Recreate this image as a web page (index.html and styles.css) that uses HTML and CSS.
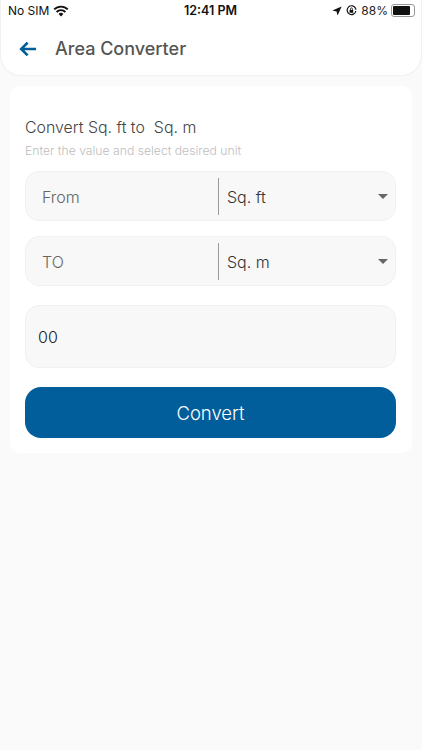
FILE: index.html
```html
<!DOCTYPE html>
<html lang="en">
<head>
    <meta charset="UTF-8">
    <meta name="viewport" content="width=device-width, initial-scale=1.0">
    <title>Area Converter</title>
    <link rel="stylesheet" href="styles.css">
</head>
<body>

    <header class="top">
        <div class="status-bar">
            <div class="status-left">
                <span>No SIM</span>
                <svg class="wifi" width="16" height="12" viewBox="0 0 16 12">
                    <path d="M8 11.6 5.6 9a3.4 3.4 0 0 1 4.8 0z" fill="#111"/>
                    <path d="M3.6 7a6.2 6.2 0 0 1 8.8 0M1.2 4.4a9.6 9.6 0 0 1 13.6 0" fill="none" stroke="#111" stroke-width="1.9"/>
                </svg>
            </div>
            <div class="status-time">12:41 PM</div>
            <div class="status-right">
                <svg width="10" height="10" viewBox="0 0 10 10"><path d="M9.6.4 5.6 9.6 4.6 5.4.4 4.4z" fill="#111"/></svg>
                <svg width="11" height="11" viewBox="0 0 11 11">
                    <path d="M9.6 3.4A4.4 4.4 0 1 0 9.9 6" fill="none" stroke="#111" stroke-width="1.2"/>
                    <path d="M8.6 4.4h2.2L9.6 2.6z" fill="#111"/>
                    <rect x="3.6" y="5" width="3.6" height="2.8" fill="#111"/>
                    <path d="M4.4 5V3.9a1 1 0 0 1 2 0V5" fill="none" stroke="#111" stroke-width=".8"/>
                </svg>
                <span>88%</span>
                <div class="battery"><div class="battery-level"></div></div>
            </div>
        </div>
        <div class="title-bar">
            <svg class="back" width="18" height="16" viewBox="0 0 18 16">
                <path d="M17 8H2.5M8.6 1.6 2.2 8l6.4 6.4" fill="none" stroke="#025e9b" stroke-width="2.6"/>
            </svg>
            <h1>Area Converter</h1>
        </div>
    </header>

    <main class="card">
        <h2>Convert Sq. ft to&nbsp; Sq. m</h2>
        <p class="hint">Enter the value and select desired unit</p>

        <div class="field field-from">
            <span class="field-label">From</span>
            <div class="unit">
                <span>Sq. ft</span>
                <span class="caret"></span>
            </div>
        </div>

        <div class="field field-to">
            <span class="field-label">TO</span>
            <div class="unit">
                <span>Sq. m</span>
                <span class="caret"></span>
            </div>
        </div>

        <div class="result">00</div>

        <button class="convert-button">Convert</button>
    </main>

</body>
</html>
```

FILE: styles.css
```css
body {
    font-family: Inter, "Noto Sans", sans-serif;
    background-color: #fafafa;
    margin: 0;
    color: #333;
}
.top {
    height: 75px;
    margin: 0 1px;
    background-color: #ffffff;
    border-radius: 0 0 20px 20px;
    box-shadow: 0 0 2px rgba(0, 0, 0, 0.12);
}
.status-bar {
    height: 21px;
    padding: 0 6px 0 7px;
    display: flex;
    align-items: center;
    justify-content: space-between;
    position: relative;
    font-size: 12px;
    color: #111;
}
.status-left, .status-right {
    display: flex;
    align-items: center;
    gap: 4px;
}
.status-time {
    position: absolute;
    left: 183px;
    font-size: 12.5px;
    font-weight: 600;
}
.status-right span {
    color: #222;
}
.battery {
    width: 20px;
    height: 9px;
    padding: 1px;
    border: 1px solid #999;
    border-radius: 3px;
    margin-left: -1px;
}
.battery-level {
    width: 17px;
    height: 9px;
    background-color: #111;
    border-radius: 1px;
}
.title-bar {
    display: flex;
    align-items: center;
    gap: 18px;
    padding: 6px 0 0 18px;
}
.back {
    flex-shrink: 0;
}
h1 {
    margin: 0;
    font-size: 18px;
    line-height: 44px;
    font-weight: 500;
    color: #555;
}
.card {
    margin: 11px 10px 0;
    padding: 32px 16px 15px 15px;
    background-color: #ffffff;
    border-radius: 10px;
}
h2 {
    margin: 0;
    font-size: 15.9px;
    line-height: 20px;
    font-weight: 300;
    color: #444;
}
.hint {
    margin: 6px 0 13px;
    font-size: 12.2px;
    line-height: 14px;
    font-weight: 300;
    color: #bdbdbd;
}
.field {
    height: 48px;
    display: flex;
    align-items: center;
    background-color: #f8f8f8;
    border: 1px solid #f1f1f1;
    border-radius: 14px;
    font-size: 16px;
    font-weight: 300;
}
.field-to {
    margin-top: 15px;
}
.field-label {
    width: 176px;
    padding-left: 16px;
    padding-top: 1px;
    color: #666;
}
.unit {
    flex: 1;
    height: 37px;
    display: flex;
    align-items: center;
    justify-content: space-between;
    padding: 0 7px 0 8px;
    border-left: 1px solid #999;
    color: #333;
}
.unit span:first-child {
    padding-top: 1px;
}
.caret {
    width: 0;
    height: 0;
    border-left: 5px solid transparent;
    border-right: 5px solid transparent;
    border-top: 5px solid #666;
}
.result {
    height: 61px;
    margin-top: 19px;
    padding-left: 12px;
    display: flex;
    align-items: center;
    background-color: #f8f8f8;
    border: 1px solid #f1f1f1;
    border-radius: 14px;
    font-size: 16px;
    font-weight: 300;
    color: #222;
}
.convert-button {
    display: block;
    width: 100%;
    height: 51px;
    margin-top: 19px;
    background-color: #025e9b;
    color: #ffffff;
    border: none;
    border-radius: 16px;
    font-family: inherit;
    font-size: 18.5px;
    font-weight: 300;
    cursor: pointer;
}
```
